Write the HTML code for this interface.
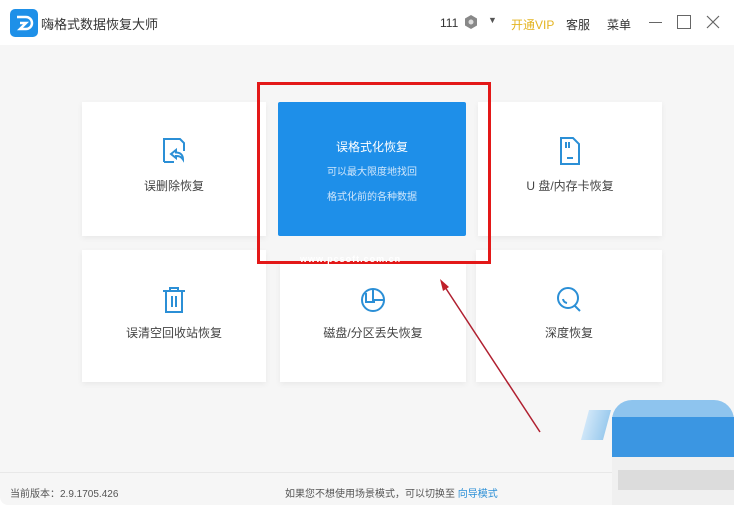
<!DOCTYPE html><html><head><meta charset="utf-8"><style>
*{margin:0;padding:0;box-sizing:border-box}
body{width:734px;height:530px;background:#fff;position:relative;overflow:hidden;font-family:"Liberation Sans","Noto Sans CJK SC",sans-serif;color:#333}
.a{position:absolute}
.card{position:absolute;background:#fff;box-shadow:0 2px 6px rgba(0,0,0,.06);text-align:center;font-size:12px;color:#444}
.card svg{position:absolute;left:50%;margin-left:-14px}
.card span{position:absolute;left:0;right:0}
</style></head><body>
<div class="a" style="left:0;top:45px;width:734px;height:460px;background:#f6f6f6;border-radius:0 0 8px 8px"></div>
<!-- title bar -->
<svg class="a" style="left:10px;top:9px" width="28" height="28" viewBox="0 0 28 28"><rect width="28" height="28" rx="5" fill="#1e90e8"/><path d="M7 8h9a6 6 0 0 1 0 12h-6l6-6H10" fill="none" stroke="#fff" stroke-width="2.5"/></svg>
<div class="a" style="left:41px;top:14px;font-size:13px;color:#333">嗨格式数据恢复大师</div>
<div class="a" style="left:440px;top:16px;font-size:12px">111</div>
<svg class="a" style="left:464px;top:14px" width="14" height="16"><path d="M7 1l6 3.5v7L7 15 1 11.5v-7z" fill="#888"/><circle cx="7" cy="8" r="2.5" fill="#ddd"/></svg>
<div class="a" style="left:488px;top:15px;font-size:9px;color:#555">▼</div>
<div class="a" style="left:511px;top:16px;font-size:12px;color:#e4b422">开通VIP</div>
<div class="a" style="left:566px;top:16px;font-size:12px">客服</div>
<div class="a" style="left:607px;top:16px;font-size:12px">菜单</div>
<div class="a" style="left:649px;top:22px;width:13px;height:1px;background:#666"></div>
<div class="a" style="left:677px;top:15px;width:14px;height:14px;border:1px solid #666"></div>
<svg class="a" style="left:706px;top:15px" width="14" height="14"><path d="M1 1l12 12M13 1L1 13" stroke="#666" stroke-width="1.2"/></svg>
<!-- cards -->
<div class="card" style="left:82px;top:102px;width:184px;height:134px">
<svg style="top:34px" width="28" height="30" viewBox="0 0 28 30"><path d="M4 26V3h16l4 4v8M4 26h10" fill="none" stroke="#2b8fd6" stroke-width="2"/><path d="M11 18l5-4v2.5c4 0 7 2 7 7-2-3-4-3.5-7-3.5V22z" fill="none" stroke="#2b8fd6" stroke-width="2"/></svg>
<span style="top:75px">误删除恢复</span></div>
<div class="a" style="left:278px;top:102px;width:188px;height:134px;background:#1e8fe9;border-radius:2px;text-align:center;color:#fff">
<div style="margin-top:36px;font-size:12px">误格式化恢复</div>
<div style="margin-top:8px;font-size:10px;color:#cfe6fb">可以最大限度地找回</div>
<div style="margin-top:10px;font-size:10px;color:#cfe6fb">格式化前的各种数据</div></div>
<div class="card" style="left:478px;top:102px;width:184px;height:134px">
<svg style="top:34px" width="28" height="30" viewBox="0 0 28 30"><path d="M5 2h12l6 6v20H5z" fill="none" stroke="#2b8fd6" stroke-width="2"/><path d="M10 6v6M13 6v6M11 22h6" stroke="#2b8fd6" stroke-width="2"/></svg>
<span style="top:75px">U 盘/内存卡恢复</span></div>
<div class="card" style="left:82px;top:250px;width:184px;height:132px">
<svg style="top:35px" width="28" height="30" viewBox="0 0 28 30"><path d="M3 6h22M10 6V3h8v3M6 6v21h16V6M12 11v11M16 11v11" fill="none" stroke="#2b8fd6" stroke-width="2"/></svg>
<span style="top:74px">误清空回收站恢复</span></div>
<div class="card" style="left:280px;top:262px;width:186px;height:120px">
<svg style="top:23px" width="28" height="30" viewBox="0 0 28 30"><circle cx="14" cy="15" r="11" fill="none" stroke="#2b8fd6" stroke-width="2"/><path d="M14 4v11h11M7 8v9h9" fill="none" stroke="#2b8fd6" stroke-width="2"/></svg>
<span style="top:62px">磁盘/分区丢失恢复</span></div>
<div class="card" style="left:476px;top:250px;width:186px;height:132px">
<svg style="top:35px" width="28" height="30" viewBox="0 0 28 30"><circle cx="13" cy="13" r="10" fill="none" stroke="#2b8fd6" stroke-width="2"/><path d="M20 21l5 5M8 14a5 5 0 0 0 4 4" stroke="#2b8fd6" stroke-width="2" fill="none"/></svg>
<span style="top:74px">深度恢复</span></div>
<!-- red box and arrow -->
<div class="a" style="left:257px;top:82px;width:234px;height:182px;border:3px solid #e31818"></div>
<div class="a" style="left:300px;top:254px;font-size:9px;font-weight:bold;color:#fff;letter-spacing:1px">www.pcsoft.com.cn</div>
<svg class="a" style="left:0;top:0" width="734" height="530"><path d="M540 432L443 284" stroke="#b02030" stroke-width="1.5"/><path d="M440 279l3 12 6-4z" fill="#c0202a"/></svg>
<!-- footer -->
<div class="a" style="left:0;top:472px;width:734px;height:1px;background:#e8e8e8"></div>
<div class="a" style="left:10px;top:485px;font-size:10px;color:#555">当前版本：2.9.1705.426</div>
<div class="a" style="left:285px;top:485px;font-size:10px;color:#555">如果您不想使用场景模式，可以切换至 <span style="color:#2b8fd6">向导模式</span></div>
<!-- blurred blob -->
<div class="a" style="left:585px;top:410px;width:22px;height:30px;background:linear-gradient(90deg,#cfe6f8,#9ccbee);transform:skewX(-15deg)"></div>
<div class="a" style="left:612px;top:400px;width:122px;height:42px;background:#8ec4ee;border-radius:20px 20px 0 0"></div>
<div class="a" style="left:612px;top:417px;width:122px;height:40px;background:#3b96e2"></div>
<div class="a" style="left:612px;top:457px;width:122px;height:48px;background:#f0f0f0"></div>
<div class="a" style="left:618px;top:470px;width:116px;height:20px;background:#dcdcdc"></div>
</body></html>
